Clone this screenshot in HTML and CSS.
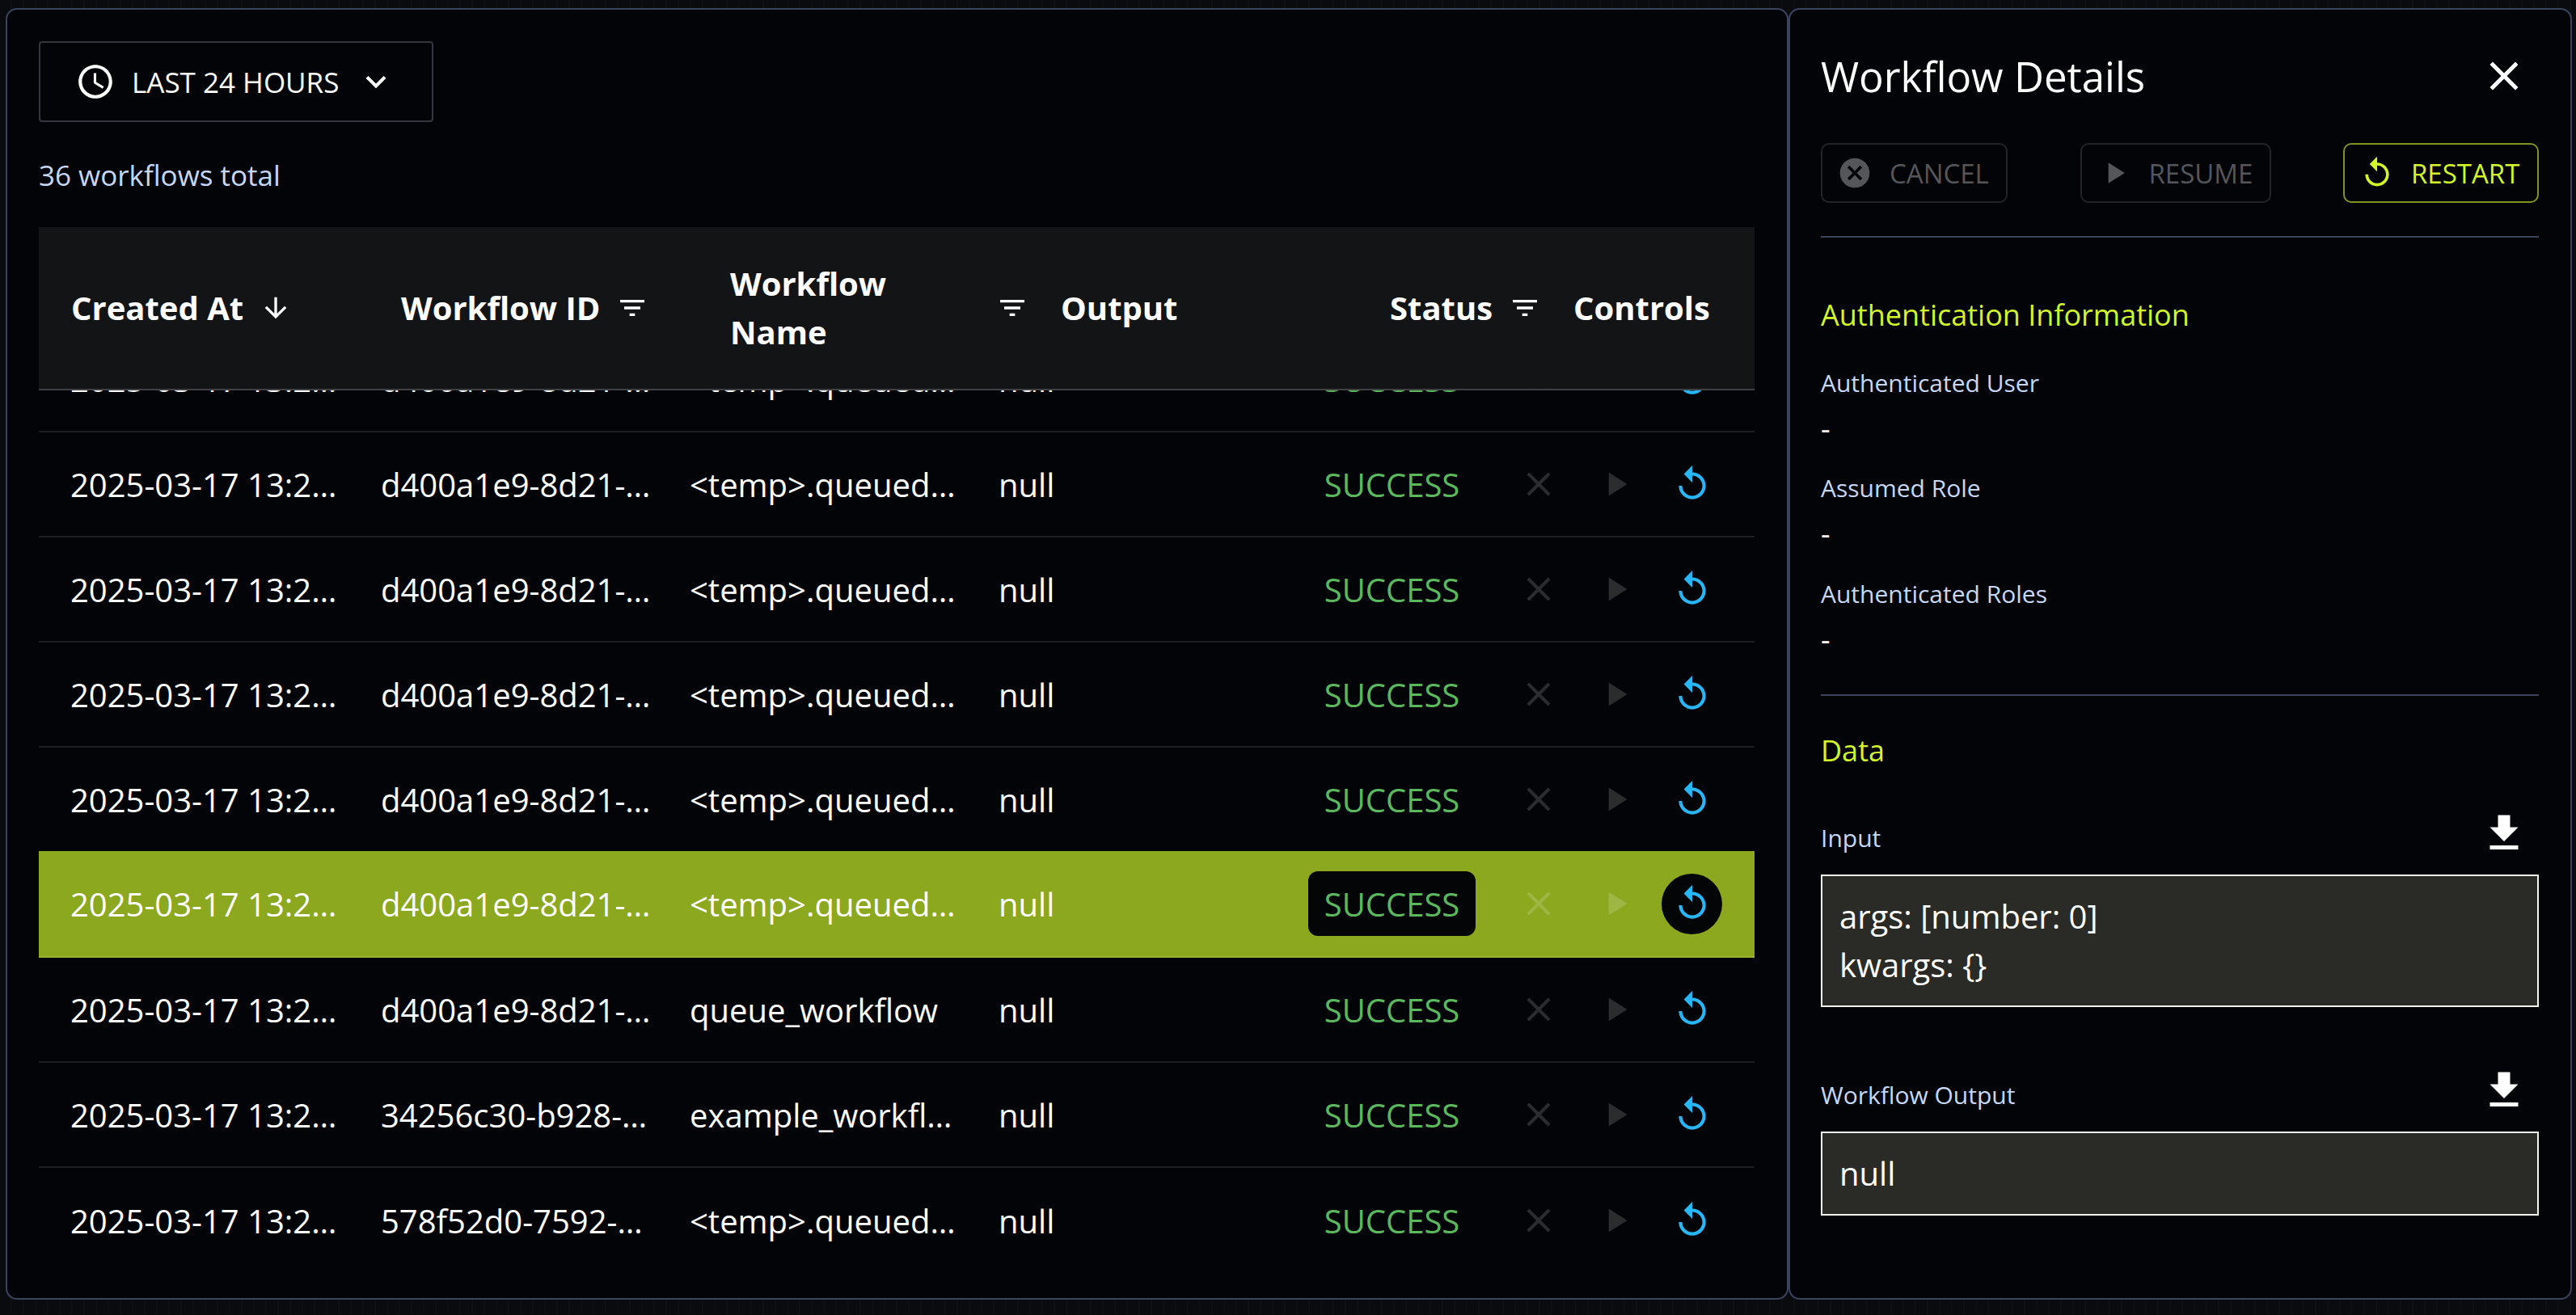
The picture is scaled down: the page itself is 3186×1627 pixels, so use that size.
FILE: index.html
```html
<!DOCTYPE html>
<html lang="en">
<head>
<meta charset="utf-8">
<title>Workflows</title>
<link rel="stylesheet" href="styles.css">
</head>
<body>
<svg class="sprite" aria-hidden="true">
  <symbol id="i-restart" viewBox="0 0 24 24"><path d="M12 5V1L7 6l5 5V7c3.31 0 6 2.69 6 6s-2.69 6-6 6-6-2.69-6-6H4c0 4.42 3.58 8 8 8s8-3.58 8-8-3.58-8-8-8z"/></symbol>
  <symbol id="i-close" viewBox="0 0 24 24"><path d="M19 6.41 17.59 5 12 10.59 6.41 5 5 6.41 10.59 12 5 17.59 6.41 19 12 13.41 17.59 19 19 17.59 13.41 12z"/></symbol>
  <symbol id="i-play" viewBox="0 0 24 24"><path d="M8 5v14l11-7z"/></symbol>
  <symbol id="i-filter" viewBox="0 0 24 24"><path d="M10 18h4v-2h-4v2zM3 6v2h18V6H3zm3 7h12v-2H6v2z"/></symbol>
  <symbol id="i-down" viewBox="0 0 24 24"><path d="M20 12l-1.41-1.41L13 16.17V4h-2v12.17l-5.58-5.59L4 12l8 8 8-8z"/></symbol>
  <symbol id="i-clock" viewBox="0 0 24 24"><path d="M11.99 2C6.47 2 2 6.48 2 12s4.47 10 9.99 10C17.52 22 22 17.52 22 12S17.52 2 11.99 2zM12 20c-4.42 0-8-3.58-8-8s3.58-8 8-8 8 3.58 8 8-3.58 8-8 8z"/><path d="M12.5 7H11v6l5.25 3.15.75-1.23-4.5-2.67z"/></symbol>
  <symbol id="i-chev" viewBox="0 0 24 24"><path d="M16.59 8.59 12 13.17 7.41 8.59 6 10l6 6 6-6z"/></symbol>
  <symbol id="i-cancel" viewBox="0 0 24 24"><path d="M12 2C6.47 2 2 6.47 2 12s4.47 10 10 10 10-4.47 10-10S17.53 2 12 2zm5 13.59L15.59 17 12 13.41 8.41 17 7 15.59 10.59 12 7 8.41 8.41 7 12 10.59 15.59 7 17 8.41 13.41 12 17 15.59z"/></symbol>
  <symbol id="i-download" viewBox="0 0 24 24"><path d="M5 20h14v-2H5zM19 9h-4V3H9v6H5l7 7z"/></symbol>
</svg>
<div class="app">
  <main class="panel list-panel">
    <button class="range"><svg class="ic50"><use href="#i-clock"/></svg><span>LAST 24 HOURS</span><svg class="ic50 chev"><use href="#i-chev"/></svg></button>
    <p class="total">36 workflows total</p>
    <div class="thead">
      <div class="th"><span>Created At</span><svg class="ic40 sort"><use href="#i-down"/></svg></div>
      <div class="th"><span>Workflow ID</span><svg class="ic40 filt"><use href="#i-filter"/></svg></div>
      <div class="th"><span class="wrap">Workflow Name</span><svg class="ic40"><use href="#i-filter"/></svg></div>
      <div class="th"><span>Output</span></div>
      <div class="th"><span>Status</span><svg class="ic40 filt"><use href="#i-filter"/></svg></div>
      <div class="th"><span>Controls</span></div>
    </div>
    <div class="tbody">
      <div class="rows">
        <div class="row"><span class="cell">2025-03-17 13:25:41</span><span class="cell">d400a1e9-8d21-4b0e-a7c1</span><span class="cell">&lt;temp&gt;.queued_workflow</span><span class="cell">null</span><span class="status">SUCCESS</span><div class="ctl"><span class="act off"><svg class="ic50"><use href="#i-close"/></svg></span><span class="act off"><svg class="ic50"><use href="#i-play"/></svg></span><span class="act on"><svg class="ic50"><use href="#i-restart"/></svg></span></div></div>
        <div class="row"><span class="cell">2025-03-17 13:25:40</span><span class="cell">d400a1e9-8d21-4b0e-a7c2</span><span class="cell">&lt;temp&gt;.queued_workflow</span><span class="cell">null</span><span class="status">SUCCESS</span><div class="ctl"><span class="act off"><svg class="ic50"><use href="#i-close"/></svg></span><span class="act off"><svg class="ic50"><use href="#i-play"/></svg></span><span class="act on"><svg class="ic50"><use href="#i-restart"/></svg></span></div></div>
        <div class="row"><span class="cell">2025-03-17 13:25:39</span><span class="cell">d400a1e9-8d21-4b0e-a7c3</span><span class="cell">&lt;temp&gt;.queued_workflow</span><span class="cell">null</span><span class="status">SUCCESS</span><div class="ctl"><span class="act off"><svg class="ic50"><use href="#i-close"/></svg></span><span class="act off"><svg class="ic50"><use href="#i-play"/></svg></span><span class="act on"><svg class="ic50"><use href="#i-restart"/></svg></span></div></div>
        <div class="row"><span class="cell">2025-03-17 13:25:38</span><span class="cell">d400a1e9-8d21-4b0e-a7c4</span><span class="cell">&lt;temp&gt;.queued_workflow</span><span class="cell">null</span><span class="status">SUCCESS</span><div class="ctl"><span class="act off"><svg class="ic50"><use href="#i-close"/></svg></span><span class="act off"><svg class="ic50"><use href="#i-play"/></svg></span><span class="act on"><svg class="ic50"><use href="#i-restart"/></svg></span></div></div>
        <div class="row"><span class="cell">2025-03-17 13:25:37</span><span class="cell">d400a1e9-8d21-4b0e-a7c5</span><span class="cell">&lt;temp&gt;.queued_workflow</span><span class="cell">null</span><span class="status">SUCCESS</span><div class="ctl"><span class="act off"><svg class="ic50"><use href="#i-close"/></svg></span><span class="act off"><svg class="ic50"><use href="#i-play"/></svg></span><span class="act on"><svg class="ic50"><use href="#i-restart"/></svg></span></div></div>
        <div class="row selected"><span class="cell">2025-03-17 13:25:36</span><span class="cell">d400a1e9-8d21-4b0e-a7c6</span><span class="cell">&lt;temp&gt;.queued_workflow</span><span class="cell">null</span><span class="status">SUCCESS</span><div class="ctl"><span class="act off"><svg class="ic50"><use href="#i-close"/></svg></span><span class="act off"><svg class="ic50"><use href="#i-play"/></svg></span><span class="act on"><svg class="ic50"><use href="#i-restart"/></svg></span></div></div>
        <div class="row"><span class="cell">2025-03-17 13:25:35</span><span class="cell">d400a1e9-8d21-4b0e-a7c7</span><span class="cell">queue_workflow</span><span class="cell">null</span><span class="status">SUCCESS</span><div class="ctl"><span class="act off"><svg class="ic50"><use href="#i-close"/></svg></span><span class="act off"><svg class="ic50"><use href="#i-play"/></svg></span><span class="act on"><svg class="ic50"><use href="#i-restart"/></svg></span></div></div>
        <div class="row"><span class="cell">2025-03-17 13:25:34</span><span class="cell">34256c30-b928-4f11-9a20</span><span class="cell">example_workflow</span><span class="cell">null</span><span class="status">SUCCESS</span><div class="ctl"><span class="act off"><svg class="ic50"><use href="#i-close"/></svg></span><span class="act off"><svg class="ic50"><use href="#i-play"/></svg></span><span class="act on"><svg class="ic50"><use href="#i-restart"/></svg></span></div></div>
        <div class="row last"><span class="cell">2025-03-17 13:25:33</span><span class="cell">578f52d0-7592-4e3a-8b16</span><span class="cell">&lt;temp&gt;.queued_workflow</span><span class="cell">null</span><span class="status">SUCCESS</span><div class="ctl"><span class="act off"><svg class="ic50"><use href="#i-close"/></svg></span><span class="act off"><svg class="ic50"><use href="#i-play"/></svg></span><span class="act on"><svg class="ic50"><use href="#i-restart"/></svg></span></div></div>
      </div>
    </div>
  </main>
  <aside class="panel detail-panel">
    <header class="detail-head"><h1>Workflow Details</h1><svg class="ic60"><use href="#i-close"/></svg></header>
    <div class="actions">
      <button class="btn disabled b-cancel"><svg class="ic44"><use href="#i-cancel"/></svg><span>CANCEL</span></button>
      <button class="btn disabled b-resume"><svg class="ic44"><use href="#i-play"/></svg><span>RESUME</span></button>
      <button class="btn active b-restart"><svg class="ic44"><use href="#i-restart"/></svg><span>RESTART</span></button>
    </div>
    <section class="auth">
      <h2>Authentication Information</h2>
      <div class="field"><label>Authenticated User</label><p>-</p></div>
      <div class="field"><label>Assumed Role</label><p>-</p></div>
      <div class="field"><label>Authenticated Roles</label><p>-</p></div>
    </section>
    <section class="data">
      <h2>Data</h2>
      <div class="data-head first"><label>Input</label><svg class="ic60"><use href="#i-download"/></svg></div>
      <div class="code">args: [number: 0]<br>kwargs: {}</div>
      <div class="data-head second"><label>Workflow Output</label><svg class="ic60"><use href="#i-download"/></svg></div>
      <div class="code">null</div>
    </section>
  </aside>
</div>
</body>
</html>
```
FILE: styles.css
```css
* { box-sizing: border-box; }
html, body { margin: 0; height: 100%; }
body {
  background: repeating-linear-gradient(90deg, #0a0b0f 0 13px, #0f1014 13px 15px);
  font-family: "Open Sans", "Noto Sans", sans-serif;
  color: #fff;
  overflow: hidden;
}
.sprite { display: none; }
svg { fill: currentColor; flex: none; display: block; }
.ic40 { width: 40px; height: 40px; }
.ic44 { width: 44px; height: 44px; }
.ic50 { width: 50px; height: 50px; }
.ic60 { width: 60px; height: 60px; }

.app { display: flex; height: 1627px; padding: 10px 5px 19px 7px; }
.panel { background: #030407; border: 2px solid #39445e; border-radius: 14px; height: 100%; }
.list-panel { width: 2205px; padding: 39px 40px 0 39px; overflow: hidden; }
.detail-panel { width: 969px; padding: 0 39px 0 38px; }

.range {
  display: flex; align-items: center; width: 488px; height: 100px; padding: 0 0 0 43px;
  background: transparent; border: 2px solid #33363f; border-radius: 4px; color: #fff;
  font: 400 35px "Open Sans", sans-serif;
}
.range span { margin-left: 20px; white-space: nowrap; }
.range .chev { margin-left: 21px; }
.total { margin: 45px 0 0; font-size: 35px; line-height: 42px; color: #c8d7f5; }

.thead {
  display: grid; grid-template-columns: 408px 407px 409px 407px 227px 1fr;
  height: 202px; margin-top: 43px; background: #131416; border-bottom: 2px solid #3f4145;
}
.th {
  display: flex; align-items: center; padding-left: 40px; font-size: 40px; font-weight: 700;
  line-height: 60px; white-space: nowrap;
}
.wrap { white-space: normal; width: min-content; margin-right: auto; }
.sort { margin-left: 20px; }
.filt { margin-left: 20px; }

.tbody { height: 1092px; overflow: hidden; }
.rows { margin-top: -78px; }
.row {
  display: grid; grid-template-columns: 384px 382px 382px 383px 207px 1fr;
  align-items: center; height: 130px; padding-left: 39px; border-bottom: 2px solid #1e1f22;
  font-size: 40px; font-weight: 400;
}
.row.last { border-bottom: 0; }
.row.selected { height: 132px; margin-top: -2px; background: #8ca81f; border-bottom-color: #9bb52e; }
.cell { overflow: hidden; text-overflow: ellipsis; white-space: nowrap; padding-right: 40px; }
.status {
  display: flex; align-items: center; justify-content: center; height: 80px; border-radius: 12px;
  color: #5cb85c; font-size: 40px; font-weight: 400;
}
.row.selected .status { background: #040507; }
.ctl { display: flex; gap: 20px; margin-left: 40px; }
.act { display: flex; align-items: center; justify-content: center; width: 75px; height: 75px; border-radius: 50%; }
.act.off { color: rgba(255, 255, 255, .16); }
.act.on { color: #29b6f6; }
.row.selected .act.on { background: #040507; }

.detail-head { display: flex; align-items: center; justify-content: space-between; height: 66px; margin-top: 49px; padding-right: 13px; }
h1 { margin: 0; font-size: 51px; font-weight: 400; line-height: 66px; }
.actions { display: flex; justify-content: space-between; margin-top: 50px; padding-bottom: 41px; border-bottom: 2px solid #39445e; }
.btn {
  display: flex; align-items: center; height: 74px; padding: 0 0 0 18px; background: transparent;
  border: 2px solid; border-radius: 10px; font: 400 33px "Open Sans", sans-serif;
}
.btn span { margin-left: 21px; }
.b-cancel { width: 231px; }
.b-resume { width: 236px; }
.b-restart { width: 242px; }
.b-restart span { margin-left: 20px; }
.disabled { color: #55565a; border-color: #232427; }
.active { color: #d2f52b; border-color: #7f9320; }

h2 { margin: 0; font-size: 36px; font-weight: 400; line-height: 46px; color: #d2f52b; }
.auth { padding: 73px 0 0; height: 567px; border-bottom: 2px solid #39445e; }
.auth h2 { margin-bottom: 41px; }
.field { height: 130px; }
.field:last-child { padding-top: 1px; }
.field label, .data-head label { display: block; font-size: 30px; line-height: 40px; color: #c8d7f5; }
.field p { margin: 17px 0 0; font-size: 36px; line-height: 40px; }
.data { padding-top: 45px; }
.data-head { display: flex; justify-content: space-between; padding-right: 13px; height: 60px; }
.data-head label { margin-top: 16px; }
.data-head.first { margin-top: 49px; }
.data-head.second { margin-top: 73px; }
.code { margin-top: 21px; padding: 20px 21px; border: 2px solid #f2f2ee; background: #2a2b26; font-size: 40px; line-height: 60px; }
```
